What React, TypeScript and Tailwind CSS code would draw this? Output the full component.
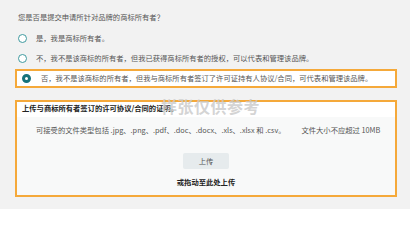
import React from 'react'

const font = { fontFamily: '"Noto Sans CJK SC", "Noto Sans", sans-serif' }

function Radio({ checked }: { checked?: boolean }) {
  return checked ? (
    <span className="inline-block w-[9px] h-[9px] rounded-full border-[3px] border-[#17737b] bg-white shrink-0" />
  ) : (
    <span className="inline-block w-[9px] h-[9px] rounded-full border border-[#3f9a9f] bg-white shrink-0" />
  )
}

export default function App() {
  return (
    <div
      className="w-[410px] h-[209px] bg-[#f2f2f2] pt-[13px] pl-[15px] pr-[13px] text-[7.3px] leading-[9px] text-[#555] overflow-hidden"
      style={font}
    >
      {/* Question */}
      <p className="pl-[3px]">您是否是提交申请所针对品牌的商标所有者？</p>

      {/* Options */}
      <div className="mt-[6px]">
        <label className="flex items-center h-[20px] pl-[3px] gap-[9px]">
          <Radio />
          <span>是，我是商标所有者。</span>
        </label>
        <label className="flex items-center h-[20px] pl-[3px] gap-[9px]">
          <Radio />
          <span>不，我不是该商标的所有者，但我已获得商标所有者的授权，可以代表和管理该品牌。</span>
        </label>
        <label className="mt-[1px] flex items-center h-[19px] pl-[5px] gap-[10px] border-2 border-[#f5a93a] bg-white">
          <Radio checked />
          <span>否，我不是该商标的所有者，但我与商标所有者签订了许可证持有人协议/合同，可代表和管理该品牌。</span>
        </label>
      </div>

      {/* Upload */}
      <div className="relative mt-[12px] h-[97px] border-2 border-[#f5a93a] bg-white flex flex-col">
        <p className="pl-[5px] pt-[2px] h-[15px] font-bold text-[#222]">
          上传与商标所有者签订的许可协议/合同的证明。
        </p>
        <span className="absolute left-[144px] top-[-6px] text-[16px] leading-[20px] font-bold tracking-[0.5px] text-[#c9c9c9]/80 pointer-events-none">
          样张仅供参考
        </span>
        <div className="flex-1 bg-[#f8f9f9] flex flex-col items-center">
          <p className="self-start pl-[19px] pt-[9px] text-[#555]">
            可接受的文件类型包括 .jpg、.png、.pdf、.doc、.docx、.xls、.xlsx 和 .csv。
            <span className="ml-[16px]">文件大小不应超过 10MB</span>
          </p>
          <button className="mt-[18px] w-[46px] h-[16px] rounded-[2px] bg-[#e6ebed] text-[7.3px] text-[#555]">
            上传
          </button>
          <p className="mt-[9px] font-bold text-[#222]">或拖动至此处上传</p>
        </div>
      </div>
    </div>
  )
}
